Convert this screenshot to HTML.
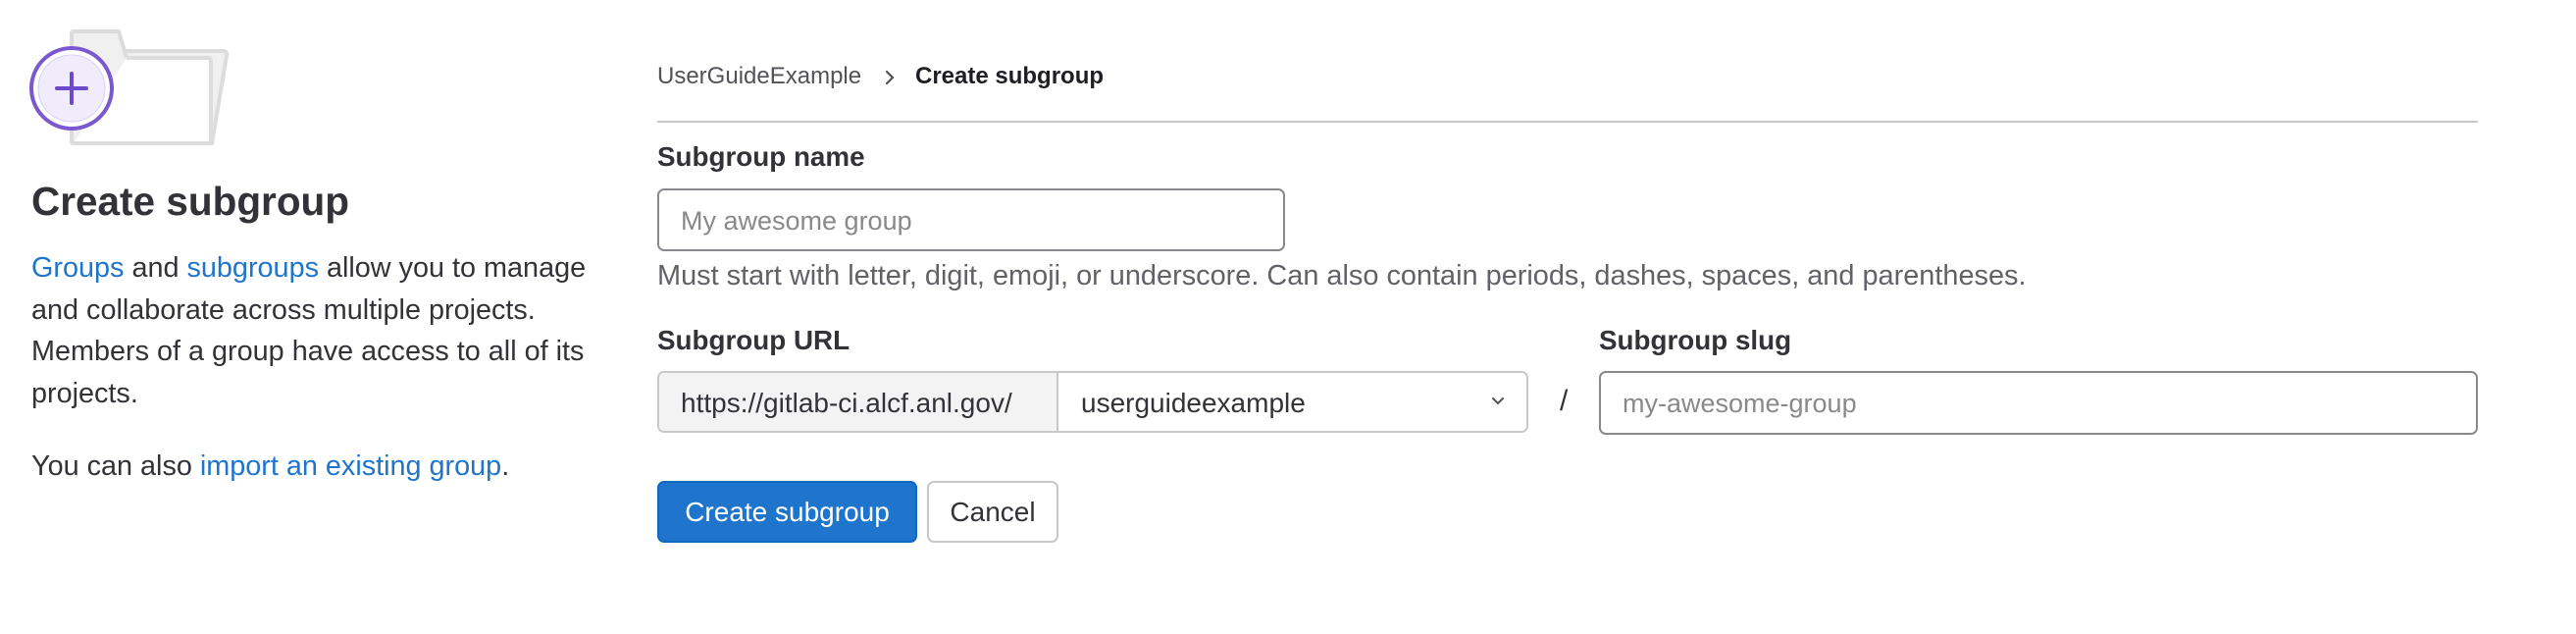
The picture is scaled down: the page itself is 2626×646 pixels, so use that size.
<!DOCTYPE html>
<html><head><meta charset="utf-8"><style>
*{box-sizing:border-box;margin:0;padding:0}
body{width:2626px;height:646px;background:#fff;font-family:"Liberation Sans",Arial,sans-serif;color:#333238;position:relative;overflow:hidden}
.a{position:absolute;white-space:nowrap}
a{color:#1f75cb;text-decoration:none}
.lbl{font-weight:bold;font-size:27.8px;color:#333238}
.inp{position:absolute;border:2px solid #89888d;border-radius:7px;background:#fff}
.ph{color:#89888d;font-size:27px}
</style></head><body>
<svg class="a" style="left:0;top:0" width="260" height="200" viewBox="0 0 260 200">
<path d="M75 32 H121 L127 52 H227 Q232 52 231 57 L216 146 H75 Q73 146 73 144 V34 Q73 32 75 32Z" fill="#f0f0f0" stroke="#dcdcdc" stroke-width="4" stroke-linejoin="round"/>
<path d="M129 59 H211 Q215 59 215 63 V146 H75" fill="#fff" stroke="#dcdcdc" stroke-width="4" stroke-linejoin="round"/>
<path d="M127 52 L129 59" stroke="#dcdcdc" stroke-width="4"/>
<circle cx="73" cy="90" r="41" fill="#fff" stroke="#7b58cf" stroke-width="4"/>
<circle cx="73" cy="90" r="34" fill="#f0ecfb" stroke="#d8cff3" stroke-width="1"/>
<path d="M73 75 V105 M58 90 H88" stroke="#6e49cb" stroke-width="4" stroke-linecap="round"/>
</svg>
<div class="a" style="left:32px;top:182px;font-size:40.5px;font-weight:bold;color:#333238">Create subgroup</div>
<div class="a" style="left:32px;top:252px;font-size:28.8px;line-height:42.5px;white-space:normal;width:640px">
<a>Groups</a> and <a>subgroups</a> allow you to manage<br>and collaborate across multiple projects.<br>Members of a group have access to all of its<br>projects.</div>
<div class="a" style="left:32px;top:457px;font-size:28.8px;line-height:36px">You can also <a>import an existing group</a>.</div>

<div class="a" style="left:670px;top:64px;font-size:24px;color:#535158">UserGuideExample</div>
<svg class="a" style="left:900px;top:70px" width="14" height="18" viewBox="0 0 14 18"><path d="M4 3 L10 9 L4 15" fill="none" stroke="#535158" stroke-width="2.2" stroke-linecap="round"/></svg>
<div class="a" style="left:933px;top:64px;font-size:24px;font-weight:bold;color:#1f1e24">Create subgroup</div>
<div class="a" style="left:670px;top:123px;width:1856px;height:2px;background:#c8c8c8"></div>

<div class="a lbl" style="left:670px;top:144px">Subgroup name</div>
<div class="inp" style="left:670px;top:192px;width:640px;height:64px"><span class="a ph" style="left:22px;top:16px">My awesome group</span></div>
<div class="a" style="left:670px;top:265px;font-size:28.9px;color:#626168">Must start with letter, digit, emoji, or underscore. Can also contain periods, dashes, spaces, and parentheses.</div>

<div class="a lbl" style="left:670px;top:331px">Subgroup URL</div>
<div class="a lbl" style="left:1630px;top:331px">Subgroup slug</div>
<div class="a" style="left:670px;top:378px;width:888px;height:63px;border:2px solid #c8c8cc;border-radius:7px;overflow:hidden;background:#fff">
<div class="a" style="left:0;top:0;width:407px;height:59px;background:#f3f3f3;border-right:2px solid #c8c8cc"></div>
<span class="a" style="left:22px;top:15px;font-size:28px;color:#333238">https://gitlab-ci.alcf.anl.gov/</span>
<span class="a" style="left:430px;top:15px;font-size:28px;color:#333238">userguideexample</span>
<svg class="a" style="left:846px;top:22px" width="18" height="14" viewBox="0 0 18 14"><path d="M4 4 L9 9 L14 4" fill="none" stroke="#535158" stroke-width="2" stroke-linecap="round"/></svg>
</div>
<div class="a" style="left:1590px;top:392px;font-size:30px;color:#333238">/</div>
<div class="inp" style="left:1630px;top:378px;width:896px;height:65px"><span class="a ph" style="left:22px;top:16px">my-awesome-group</span></div>

<div class="a" style="left:670px;top:490px;width:265px;height:63px;background:#1f75cb;border:2px solid #1068bf;border-radius:7px;color:#fff;font-size:28px;text-align:center;line-height:59px">Create subgroup</div>
<div class="a" style="left:945px;top:490px;width:134px;height:63px;background:#fff;border:2px solid #c8c8cc;border-radius:7px;color:#333238;font-size:28px;text-align:center;line-height:59px">Cancel</div>
</body></html>
